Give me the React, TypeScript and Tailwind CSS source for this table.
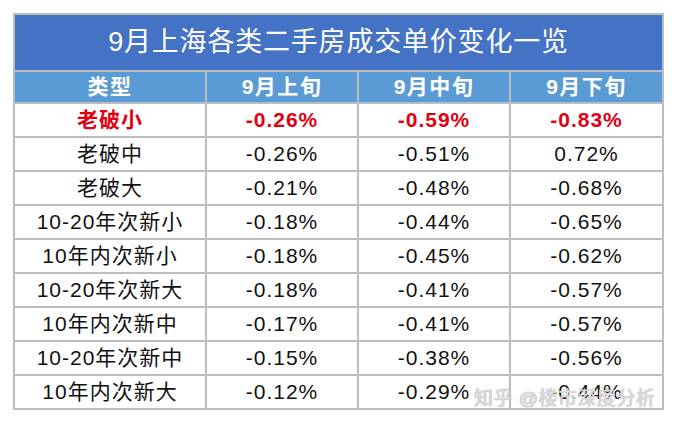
const rows = [
  { type: "老破小", a: "-0.26%", b: "-0.59%", c: "-0.83%", hot: true },
  { type: "老破中", a: "-0.26%", b: "-0.51%", c: "0.72%" },
  { type: "老破大", a: "-0.21%", b: "-0.48%", c: "-0.68%" },
  { type: "10-20年次新小", a: "-0.18%", b: "-0.44%", c: "-0.65%" },
  { type: "10年内次新小", a: "-0.18%", b: "-0.45%", c: "-0.62%" },
  { type: "10-20年次新大", a: "-0.18%", b: "-0.41%", c: "-0.57%" },
  { type: "10年内次新中", a: "-0.17%", b: "-0.41%", c: "-0.57%" },
  { type: "10-20年次新中", a: "-0.15%", b: "-0.38%", c: "-0.56%" },
  { type: "10年内次新大", a: "-0.12%", b: "-0.29%", c: "-0.44%" },
];

const headers = ["类型", "9月上旬", "9月中旬", "9月下旬"];

export default function App() {
  return (
    <div
      className="w-[677px] h-[425px] bg-white pt-[13px] pl-[13px] relative"
      style={{ fontFamily: '"Liberation Sans", "Noto Sans CJK SC", sans-serif' }}
    >
      {/* table */}
      <div className="w-[651px] grid grid-cols-[190px_150px_150px_151px] gap-[2px] p-[2px] bg-[#bdbdbd]">
        <div className="col-span-4 h-[55px] bg-[#4472c4] flex items-center justify-center text-white text-[27px] tracking-[0.8px]">
          9月上海各类二手房成交单价变化一览
        </div>

        {headers.map((h) => (
          <div
            key={h}
            className="h-[30px] bg-[#5b9bd5] flex items-center justify-center text-white text-[21px] font-bold tracking-[1.5px]"
          >
            {h}
          </div>
        ))}

        {rows.map((r) =>
          [r.type, r.a, r.b, r.c].map((v, i) => (
            <div
              key={r.type + i}
              className={`h-[32px] bg-white flex items-center justify-center text-[21px] tracking-[1px] ${
                r.hot ? "text-[#e00012] font-bold" : "text-[#111]"
              }`}
            >
              {v}
            </div>
          ))
        )}
      </div>

      {/* watermark */}
      <div className="absolute left-[474px] top-[385px] text-[19px] text-[#f4f4f4]/70 tracking-[0.5px] pointer-events-none [text-shadow:0_0_1px_#a8a8a8,0_0_1px_#a8a8a8]">
        知乎 @楼市深度分析
      </div>
    </div>
  );
}
